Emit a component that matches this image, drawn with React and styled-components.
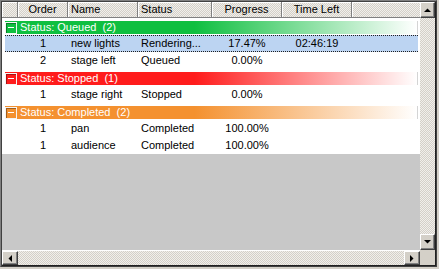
import React from "react";
import styled, { createGlobalStyle } from "styled-components";

const GlobalStyle = createGlobalStyle`
  html, body {
    margin: 0;
    padding: 0;
    background: #d4d0c8;
  }
  body {
    font-family: "Liberation Sans", Arial, sans-serif;
    font-size: 11px;
    color: #000;
  }
`;

const dither = `repeating-conic-gradient(#d4d0c8 0 25%, #f1efeb 0 50%) 0 0 / 2px 2px`;

const columns = [
  { key: "order", title: "Order", width: 50, align: "center" },
  { key: "name", title: "Name", width: 70, align: "left" },
  { key: "status", title: "Status", width: 74, align: "left" },
  { key: "progress", title: "Progress", width: 70, align: "center" },
  { key: "timeLeft", title: "Time Left", width: 70, align: "center" },
];

const groups = [
  {
    label: "Status: Queued  (2)",
    color: "#0fbf40",
    rows: [
      { order: 1, name: "new lights", status: "Rendering...", progress: "17.47%", timeLeft: "02:46:19", selected: true },
      { order: 2, name: "stage left", status: "Queued", progress: "0.00%", timeLeft: "" },
    ],
  },
  {
    label: "Status: Stopped  (1)",
    color: "#ff1c1c",
    rows: [{ order: 1, name: "stage right", status: "Stopped", progress: "0.00%", timeLeft: "" }],
  },
  {
    label: "Status: Completed  (2)",
    color: "#f4912f",
    rows: [
      { order: 1, name: "pan", status: "Completed", progress: "100.00%", timeLeft: "" },
      { order: 1, name: "audience", status: "Completed", progress: "100.00%", timeLeft: "" },
    ],
  },
];

const Frame = styled.div`
  box-sizing: border-box;
  width: 437px;
  height: 267px;
  border: 1px solid #808080;
  border-right-color: #404040;
  border-bottom-color: #404040;
  box-shadow: inset 1px 1px 0 #404040, inset -1px -1px 0 #202020;
  padding: 1px;
  display: grid;
  grid-template-columns: 1fr 15px;
  grid-template-rows: 1fr 15px;
`;

const Content = styled.div`
  display: flex;
  flex-direction: column;
  background: #c8c8c8;
  overflow: hidden;
`;

const Header = styled.div`
  display: flex;
  height: 16px;
  flex: none;
  background: ${dither};
  border-bottom: 1px solid #808080;
  box-sizing: border-box;
`;

const HeaderCell = styled.div`
  box-sizing: border-box;
  width: ${(p) => (p.$w ? `${p.$w}px` : "auto")};
  flex: ${(p) => (p.$w ? "none" : "1")};
  text-align: ${(p) => p.$align || "left"};
  padding-left: ${(p) => (p.$align === "left" ? "3px" : "0")};
  line-height: 15px;
  border-right: ${(p) => (p.$w ? "1px solid #808080" : "none")};
  box-shadow: inset 1px 1px 0 #ffffff;
  white-space: nowrap;
`;

const Rows = styled.div`
  background: #ffffff;
  flex: none;
`;

const Row = styled.div`
  display: flex;
  height: 17px;
  padding: 0 2px 0 3px;
`;

const Line = styled.div`
  flex: 1;
  display: flex;
  box-sizing: border-box;
  background: ${(p) => (p.$selected ? "#bcd4f2" : "transparent")};
  border-top: 1px dotted ${(p) => (p.$selected ? "#202020" : "transparent")};
  border-bottom: 1px dotted ${(p) => (p.$selected ? "#202020" : "transparent")};
`;

const Cell = styled.div`
  box-sizing: border-box;
  width: ${(p) => p.$w}px;
  flex: none;
  text-align: ${(p) => p.$align};
  padding-left: ${(p) => (p.$align === "left" ? "3px" : "0")};
  line-height: 15px;
  white-space: nowrap;
  overflow: hidden;
`;

const Spacer = styled.div`
  width: 13px;
  flex: none;
`;

const GroupBar = styled.div`
  flex: 1;
  display: flex;
  align-items: center;
  gap: 3px;
  margin: 3px 0 1px;
  height: 13px;
  box-sizing: border-box;
  border-right: 1px solid #d4d4d4;
  background: linear-gradient(
    to right,
    ${(p) => p.$color} 0%,
    ${(p) => p.$color} 46%,
    #ffffff 100%
  );
  color: #ffffff;
  white-space: pre;
`;

const Toggle = styled.span`
  position: relative;
  box-sizing: border-box;
  width: 12px;
  height: 12px;
  flex: none;
  border: 1px solid #f4f4f4;
  box-shadow: inset 1px 1px 0 rgba(0, 0, 0, 0.35);

  &::after {
    content: "";
    position: absolute;
    left: 2px;
    top: 4px;
    width: 6px;
    height: 1px;
    background: #ffffff;
  }
`;

const GroupLabel = styled.span`
  line-height: 13px;
`;

const VScroll = styled.div`
  display: flex;
  flex-direction: column;
  background: ${dither};
`;

const HScroll = styled.div`
  display: flex;
  background: ${dither};
  border-top: 1px solid #ffffff;
  box-sizing: border-box;
`;

const Track = styled.div`
  flex: 1;
`;

const ArrowButton = styled.div`
  box-sizing: border-box;
  width: ${(p) => (p.$horizontal ? "16px" : "15px")};
  height: ${(p) => (p.$horizontal ? "100%" : "16px")};
  flex: none;
  display: flex;
  align-items: center;
  justify-content: center;
  background: #d4d0c8;
  border-top: 1px solid #ffffff;
  border-left: 1px solid #ffffff;
  border-right: 1px solid #404040;
  border-bottom: 1px solid #404040;
  box-shadow: inset -1px -1px 0 #808080;
`;

const Corner = styled.div`
  background: #d4d0c8;
`;

const Arrow = ({ dir }) => {
  const pts = {
    up: "0,4 7,4 3.5,0.5",
    down: "0,0 7,0 3.5,3.5",
    left: "4,0 4,7 0.5,3.5",
    right: "0,0 0,7 3.5,3.5",
  }[dir];
  const horizontal = dir === "left" || dir === "right";
  return (
    <svg width={horizontal ? 4 : 7} height={horizontal ? 7 : 4} viewBox={horizontal ? "0 0 4 7" : "0 0 7 4"}>
      <polygon points={pts} fill="#000" />
    </svg>
  );
};

const App = () => {
  return (
    <>
      <GlobalStyle />
      <Frame>
        <Content>
          <Header>
            <HeaderCell $w={16} />
            {columns.map((c) => (
              <HeaderCell key={c.key} $w={c.width} $align={c.align}>
                {c.title}
              </HeaderCell>
            ))}
            <HeaderCell />
          </Header>
          <Rows>
            {groups.map((g) => (
              <React.Fragment key={g.label}>
                <Row>
                  <GroupBar $color={g.color}>
                    <Toggle />
                    <GroupLabel>{g.label}</GroupLabel>
                  </GroupBar>
                </Row>
                {g.rows.map((r, i) => (
                  <Row key={i}>
                    <Line $selected={r.selected}>
                      <Spacer />
                      {columns.map((c) => (
                        <Cell key={c.key} $w={c.width} $align={c.align}>
                          {r[c.key]}
                        </Cell>
                      ))}
                    </Line>
                  </Row>
                ))}
              </React.Fragment>
            ))}
          </Rows>
        </Content>
        <VScroll>
          <ArrowButton>
            <Arrow dir="up" />
          </ArrowButton>
          <Track />
          <ArrowButton>
            <Arrow dir="down" />
          </ArrowButton>
        </VScroll>
        <HScroll>
          <ArrowButton $horizontal>
            <Arrow dir="left" />
          </ArrowButton>
          <Track />
          <ArrowButton $horizontal>
            <Arrow dir="right" />
          </ArrowButton>
        </HScroll>
        <Corner />
      </Frame>
    </>
  );
};

export default App;
